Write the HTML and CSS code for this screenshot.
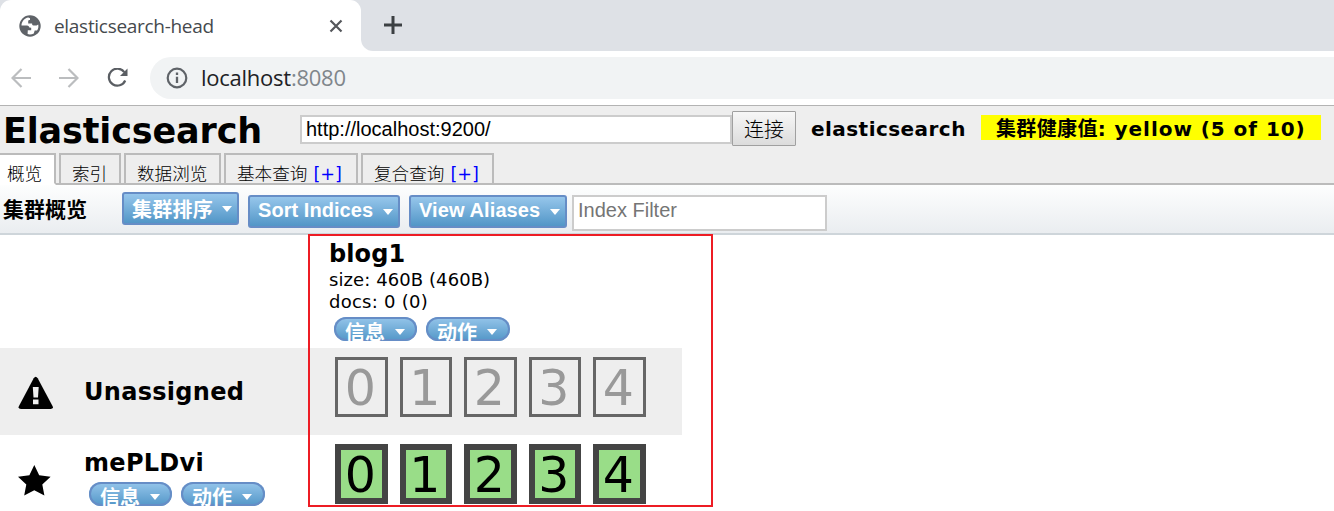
FILE: index.html
```html
<!DOCTYPE html>
<html lang="zh-CN">
<head>
<meta charset="utf-8">
<title>elasticsearch-head</title>
<link rel="stylesheet" href="styles.css">
</head>
<body>
<div class="browser">
  <div class="tabstrip">
    <div class="browser-tab">
      <svg class="globe" viewBox="0 0 22 22"><circle cx="11" cy="11" r="10.7" fill="#5f6368"/><path d="M9.3 2.6C5.4 3.2 2.6 6.800 2.500 10.500L8 10.600C9.500 10.700 10.200 11.500 10.300 12.600L12.200 12.700V15.200H8.800L8.600 19.100C10.600 19.700 13 19.400 14.800 18.500L15.700 15.600H18C19.300 13.800 19.700 11.500 19.200 9.400L17.600 10.500H14.500C13.300 10.500 13.100 9.800 13.100 8.500H9.200V6.200C9.200 5.300 10 5.200 11 5.100V3.300Z" fill="#fff"/></svg>
      <span class="browser-title">elasticsearch-head</span>
      <svg class="close" viewBox="0 0 14 14"><path d="M1.500 1.500 12.500 12.500M12.500 1.500 1.500 12.500" stroke="#54575b" stroke-width="2.200" fill="none"/></svg>
    </div>
    <div class="strip-rest">
      <svg class="plus" viewBox="0 0 18 18"><path d="M9 0V18M0 9H18" stroke="#3c4043" stroke-width="3" fill="none"/></svg>
    </div>
  </div>
  <div class="navbar">
    <svg class="arrow" viewBox="0 0 20 20"><path d="M20 10H2M10.500 1 1.500 10 10.500 19" stroke="#bbbdbf" stroke-width="2.200" fill="none"/></svg>
    <svg class="arrow" viewBox="0 0 20 20"><path d="M0 10H18M9.500 1 18.500 10 9.500 19" stroke="#bbbdbf" stroke-width="2.200" fill="none"/></svg>
    <svg class="reload" viewBox="0 0 22 20"><path d="M17.300 4.200A8.500 8.500 0 1 0 18.200 12.500" stroke="#5a5e63" stroke-width="2.200" fill="none"/><path d="M20.500 .5V8H13Z" fill="#5a5e63"/></svg>
    <div class="address">
      <svg class="info" viewBox="0 0 22 22"><circle cx="11" cy="11" r="9.300" stroke="#5f6368" stroke-width="2.200" fill="none"/><path d="M11 5.500V8M11 9.800V16" stroke="#5f6368" stroke-width="2.300"/></svg>
      <span class="url">localhost<span class="port">:8080</span></span>
    </div>
  </div>
</div>

<header class="header">
  <div class="header-top">
    <h1 class="title">Elasticsearch</h1>
    <input class="connect-url" type="text" value="http://localhost:9200/">
    <button class="connect">连接</button>
    <span class="cluster-name">elasticsearch</span>
    <span class="health">集群健康值<span class="health-value">: yellow (5 of 10)</span></span>
  </div>
  <nav class="tabs">
    <div class="tab active">概览</div>
    <div class="tab tab-indices">索引</div>
    <div class="tab tab-browser">数据浏览</div>
    <div class="tab tab-query"><span>基本查询</span><a class="add">[+]</a></div>
    <div class="tab tab-query"><span>复合查询</span><a class="add">[+]</a></div>
  </nav>
</header>

<div class="toolbar">
  <h2 class="toolbar-title">集群概览</h2>
  <div class="menu-button sort-cluster"><span>集群排序</span><i class="caret"></i></div>
  <div class="menu-button sort-indices"><span>Sort Indices</span><i class="caret"></i></div>
  <div class="menu-button aliases"><span>View Aliases</span><i class="caret"></i></div>
  <input class="filter" type="text" placeholder="Index Filter">
</div>

<main class="cluster">
  <div class="index-head">
    <h3 class="index-name">blog1</h3>
    <div class="stat size">size: 460B (460B)</div>
    <div class="stat docs">docs: 0 (0)</div>
    <div class="pills">
      <div class="pill"><span>信息</span><i class="caret"></i></div>
      <div class="pill"><span>动作</span><i class="caret"></i></div>
    </div>
  </div>
  <div class="row unassigned">
    <svg class="node-icon" viewBox="0 0 36 36"><path d="M15.700 2.300Q17.700-.7 19.700 2.300L34.500 30Q36 33 32.500 33H3Q-.5 33 1 30Z" fill="#000"/><path d="M14.800 11H20.700L20 21.500H15.500ZM15 23.500H20.500V28.300H15Z" fill="#eee"/></svg>
    <div class="node"><h3 class="node-name name-unassigned">Unassigned</h3></div>
    <div class="shards">
      <span class="shard">0</span><span class="shard">1</span><span class="shard">2</span><span class="shard">3</span><span class="shard">4</span>
    </div>
  </div>
  <div class="row started">
    <svg class="node-icon" viewBox="0 0 36 36"><path d="M16.300 2 21.200 12.200 32.600 13.700 24.300 21.500 26.400 32.600 16.300 27.200 6.200 32.600 8.300 21.500 0 13.700 11.400 12.200Z" fill="#000"/></svg>
    <div class="node">
      <h3 class="node-name name-node">mePLDvi</h3>
      <div class="pills">
        <div class="pill"><span>信息</span><i class="caret"></i></div>
        <div class="pill"><span>动作</span><i class="caret"></i></div>
      </div>
    </div>
    <div class="shards">
      <span class="shard">0</span><span class="shard">1</span><span class="shard">2</span><span class="shard">3</span><span class="shard">4</span>
    </div>
  </div>
  <div class="highlight"></div>
</main>
</body>
</html>
```

FILE: styles.css
```css
* { box-sizing: border-box; }
body {
  margin: 0;
  height: 511px;
  overflow: hidden;
  background: #fff;
  color: #000;
  font-family: Verdana, "DejaVu Sans", "Noto Sans CJK SC", sans-serif;
  white-space: nowrap;
}
h1, h2, h3 { margin: 0; }
svg { display: block; flex: none; }

/* Browser frame */
.browser { height: 106px; border-bottom: 1px solid #b3b3b3; }
.tabstrip { display: flex; height: 51px; background: linear-gradient(#dee1e6 25px, #fff 25px); }
.browser-tab { display: flex; align-items: center; width: 361px; padding: 0 18px 0 19px; background: #fff; border-radius: 11px 11px 0 0; }
.globe { width: 22px; height: 22px; }
.browser-title { margin-left: 13px; width: 260px; font: 19px/26px "Segoe UI", "Open Sans", sans-serif; color: #45494d; letter-spacing: -.3px; padding-top: 1px; }
.close { width: 14px; height: 14px; margin-left: 15px; }
.strip-rest { flex: 1; background: #dee1e6; border-bottom-left-radius: 12px; padding: 16px 0 0 23px; }
.plus { width: 18px; height: 18px; }
.navbar { display: flex; align-items: center; height: 54px; padding-left: 11px; }
.arrow { width: 20px; height: 20px; margin-right: 28px; }
.reload { width: 22px; height: 20px; }
.address { display: flex; align-items: center; flex: 1; height: 42px; margin-left: 21px; padding-left: 16px; background: #f1f3f4; border-radius: 21px 0 0 21px; }
.info { width: 22px; height: 22px; }
.url { margin: -2px 0 0 13px; font: 22px/30px "Segoe UI", "Open Sans", sans-serif; letter-spacing: -.25px; color: #202124; }
.port { color: #80868b; }

/* Header */
.header { height: 79px; background: #eee; }
.header-top { display: flex; align-items: flex-start; height: 47px; padding-left: 3px; }
.title { width: 297px; font-size: 35px; line-height: 51px; letter-spacing: -.15px; }
.connect-url { width: 432px; height: 29px; margin-top: 9px; padding: 0 4px; border: 2px solid #ccc; background: #fff; font: 20px "Liberation Sans", sans-serif; color: #000; }
.connect { width: 64px; height: 35px; margin-top: 5px; padding: 0; border: 1px solid #a0a0a0; border-radius: 1px; background: linear-gradient(#f7f7f7, #dcdcdc); font: 300 20px/33px "Noto Sans CJK SC", sans-serif; color: #000; }
.cluster-name { margin: 9px 0 0 15px; width: 170px; font-size: 20px; font-weight: bold; line-height: 28px; letter-spacing: .45px; }
.health { width: 340px; height: 25px; margin-top: 9px; padding-left: 15px; background: #ff0; font-size: 20px; font-weight: bold; line-height: 28px; letter-spacing: .35px; }
.health-value { letter-spacing: .95px; }
.tabs { display: flex; gap: 3px; height: 32px; box-shadow: inset 0 -2px #bbb; }
.tab { height: 32px; padding: 7px 11px 0; border: 2px solid #bbb; font-size: 17.6px; font-weight: 300; line-height: 25px; }
.tab.active { width: 56px; padding-left: 7px; border-left: 0; border-bottom-color: #fff; background: #fff; }
.tab-indices { width: 62px; }
.tab-browser { width: 97px; }
.tab-query { display: flex; width: 134px; }
.tab-query + .tab-query { width: 133px; }
.add { margin-left: 6px; color: #00f; font-weight: 400; }

/* Toolbar */
.toolbar { display: flex; align-items: flex-start; height: 50px; padding-left: 3px; border-bottom: 2px solid #ced5da; background: linear-gradient(#fdfefe, #eaedf0); }
.toolbar-title { width: 119px; padding-top: 9px; font-size: 21px; line-height: 32px; }
.menu-button { display: flex; height: 33px; padding-left: 8px; border: 2px solid #668dc6; border-radius: 3px; background: linear-gradient(#96c6eb, #5296c7); color: #fff; font: bold 20px/27px "Liberation Sans", "Noto Sans CJK SC", sans-serif; }
.caret { width: 10px; height: 6px; background: #fff; clip-path: polygon(0 0, 100% 0, 50% 100%); flex: none; }
.menu-button .caret { margin: 12px 5px 0 auto; }
.sort-cluster { width: 117px; margin-top: 7px; line-height: 33px; letter-spacing: .25px; }
.sort-indices { width: 152px; margin: 10px 0 0 9px; letter-spacing: .05px; }
.aliases { width: 158px; margin: 10px 0 0 9px; letter-spacing: .1px; }
.filter { width: 255px; height: 36px; margin: 10px 0 0 5px; padding: 0 4px 5px; border: 2px solid #ccc; background: #fff; font: 20px "Liberation Sans", sans-serif; }
.filter::placeholder { color: #757575; opacity: 1; }

/* Cluster grid */
.cluster { position: relative; }
.index-head { height: 113px; padding-left: 329px; }
.index-name { padding-top: 3px; font-size: 24px; line-height: 32px; letter-spacing: .1px; }
.stat { font-size: 18px; line-height: 20px; height: 22px; letter-spacing: .08px; }
.docs { letter-spacing: .25px; }
.pills { display: flex; gap: 9px; padding-left: 5px; }
.pill { display: flex; width: 83px; height: 24px; padding-left: 11px; overflow: hidden; border-radius: 12px; background: linear-gradient(#96c6eb, #5296c7); box-shadow: inset 0 0 0 2px #668dc6; color: #fff; font: bold 20px/30px "Noto Sans CJK SC", sans-serif; }
.pill:last-child { width: 84px; }
.pill .caret { margin: 12px 0 0 10px; }
.index-head .pills { margin-top: 3px; }
.row { display: flex; height: 87px; padding-left: 18px; width: 682px; }
.node-icon { width: 36px; height: 36px; margin-top: 28px; }
.node { width: 281px; padding-left: 30px; }
.node-name { font-size: 24px; line-height: 32px; letter-spacing: .3px; }
.unassigned { background: #eee; }
.unassigned .node-name { padding-top: 28px; }
.started .node-name { padding-top: 12px; }
.started .pills { margin-top: 3px; }
.shards { display: flex; gap: 12px; padding-top: 9px; }
.shard { width: 52.5px; height: 60px; padding-right: 2px; font-size: 49px; text-align: center; line-height: 58px; border: 3px solid #666; color: #999; }
.started .shard { border: 6px solid #444; background: #9d8; color: #000; line-height: 52px; }
.highlight { position: absolute; left: 308px; top: -1px; width: 405px; height: 273px; border: 2px solid #ed1c24; }
```
